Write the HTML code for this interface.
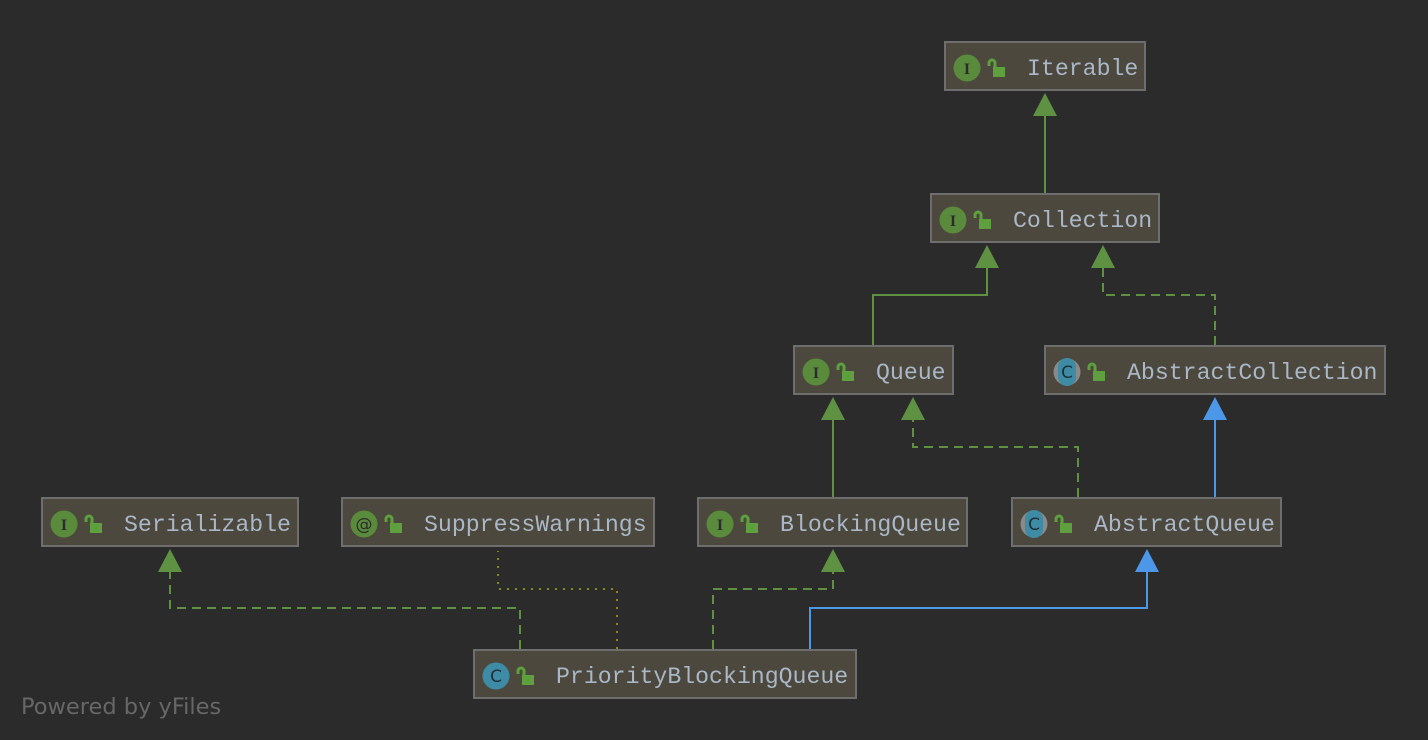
<!DOCTYPE html>
<html><head><meta charset="utf-8"><style>
html,body{margin:0;padding:0;background:#2b2b2b;width:1428px;height:740px;overflow:hidden}
.b{position:absolute;height:46px;background:#4c483e;border:2px solid #6e6e6e;box-sizing:content-box}
.t{position:absolute;left:81px;top:2px;line-height:48px;font-family:"Liberation Mono",monospace;font-size:23.2px;color:#a9b7c6;white-space:nowrap}
.ic{position:absolute;left:7px;top:11px}
.pw{position:absolute;left:21px;top:694px;font-family:"DejaVu Sans","Liberation Sans",sans-serif;font-size:22.5px;color:#676767}
</style></head><body>
<svg width="1428" height="740" style="position:absolute;left:0;top:0">
<g fill="none" stroke-width="2">
<path d="M1045 193V115" stroke="#5f9143"/>
<path d="M873 345V295H987V267" stroke="#5f9143"/>
<path d="M1215 345V295H1103V267" stroke="#5f9143" stroke-dasharray="9 6"/>
<path d="M833 497V419" stroke="#5f9143"/>
<path d="M1078 497V447H913V419" stroke="#5f9143" stroke-dasharray="9 6"/>
<path d="M1215 497V419" stroke="#4d97e8"/>
<path d="M520 649V608H170V571" stroke="#5f9143" stroke-dasharray="9 6"/>
<path d="M617 649V589H498V551" stroke="#8a8a10" stroke-dasharray="2 6"/>
<path d="M713 649V589H833V571" stroke="#5f9143" stroke-dasharray="9 6"/>
<path d="M810 649V608H1147V571" stroke="#4d97e8"/>
</g>
<g fill="#5f9143">
<path d="M1045 93l-12 23h24z"/>
<path d="M987 245l-12 23h24z"/>
<path d="M1103 245l-12 23h24z"/>
<path d="M833 397l-12 23h24z"/>
<path d="M913 397l-12 23h24z"/>
<path d="M170 549l-12 23h24z"/>
<path d="M833 549l-12 23h24z"/>
</g>
<g fill="#4d97e8">
<path d="M1215 397l-12 23h24z"/>
<path d="M1147 549l-12 23h24z"/>
</g>
</svg>

<div class="b" style="left:944px;top:41px;width:198px"><svg class="ic" width="60" height="28"><circle cx="14" cy="14" r="13.5" fill="#5a8b3d"/><text x="14" y="20" text-anchor="middle" font-family="Liberation Serif,serif" font-size="16" fill="#2b2b2b" font-weight="bold">I</text><path d="M42 15v-6a3 3 0 0 0-6 0v3" stroke="#5fa03e" stroke-width="3" fill="none"/><rect x="40" y="13" width="12" height="10" fill="#5fa03e"/></svg><span class="t">Iterable</span></div>

<div class="b" style="left:930px;top:193px;width:226px"><svg class="ic" width="60" height="28"><circle cx="14" cy="14" r="13.5" fill="#5a8b3d"/><text x="14" y="20" text-anchor="middle" font-family="Liberation Serif,serif" font-size="16" fill="#2b2b2b" font-weight="bold">I</text><path d="M42 15v-6a3 3 0 0 0-6 0v3" stroke="#5fa03e" stroke-width="3" fill="none"/><rect x="40" y="13" width="12" height="10" fill="#5fa03e"/></svg><span class="t">Collection</span></div>

<div class="b" style="left:793px;top:345px;width:157px"><svg class="ic" width="60" height="28"><circle cx="14" cy="14" r="13.5" fill="#5a8b3d"/><text x="14" y="20" text-anchor="middle" font-family="Liberation Serif,serif" font-size="16" fill="#2b2b2b" font-weight="bold">I</text><path d="M42 15v-6a3 3 0 0 0-6 0v3" stroke="#5fa03e" stroke-width="3" fill="none"/><rect x="40" y="13" width="12" height="10" fill="#5fa03e"/></svg><span class="t">Queue</span></div>

<div class="b" style="left:1044px;top:345px;width:338px"><svg class="ic" width="60" height="28"><circle cx="14" cy="14" r="13.5" fill="#8a8a8a"/><rect x="5" y="0" width="18" height="28" rx="9" fill="#3e8ba6"/><text x="14" y="20" text-anchor="middle" font-family="DejaVu Sans,sans-serif" font-size="17" fill="#1f2f38">C</text><path d="M42 15v-6a3 3 0 0 0-6 0v3" stroke="#5fa03e" stroke-width="3" fill="none"/><rect x="40" y="13" width="12" height="10" fill="#5fa03e"/></svg><span class="t">AbstractCollection</span></div>

<div class="b" style="left:41px;top:497px;width:254px"><svg class="ic" width="60" height="28"><circle cx="14" cy="14" r="13.5" fill="#5a8b3d"/><text x="14" y="20" text-anchor="middle" font-family="Liberation Serif,serif" font-size="16" fill="#2b2b2b" font-weight="bold">I</text><path d="M42 15v-6a3 3 0 0 0-6 0v3" stroke="#5fa03e" stroke-width="3" fill="none"/><rect x="40" y="13" width="12" height="10" fill="#5fa03e"/></svg><span class="t">Serializable</span></div>

<div class="b" style="left:341px;top:497px;width:310px"><svg class="ic" width="60" height="28"><circle cx="14" cy="14" r="13.5" fill="#5a8b3d"/><text x="14" y="20" text-anchor="middle" font-family="DejaVu Sans,sans-serif" font-size="17" fill="#2b2b2b">@</text><path d="M42 15v-6a3 3 0 0 0-6 0v3" stroke="#5fa03e" stroke-width="3" fill="none"/><rect x="40" y="13" width="12" height="10" fill="#5fa03e"/></svg><span class="t">SuppressWarnings</span></div>

<div class="b" style="left:697px;top:497px;width:267px"><svg class="ic" width="60" height="28"><circle cx="14" cy="14" r="13.5" fill="#5a8b3d"/><text x="14" y="20" text-anchor="middle" font-family="Liberation Serif,serif" font-size="16" fill="#2b2b2b" font-weight="bold">I</text><path d="M42 15v-6a3 3 0 0 0-6 0v3" stroke="#5fa03e" stroke-width="3" fill="none"/><rect x="40" y="13" width="12" height="10" fill="#5fa03e"/></svg><span class="t">BlockingQueue</span></div>

<div class="b" style="left:1011px;top:497px;width:267px"><svg class="ic" width="60" height="28"><circle cx="14" cy="14" r="13.5" fill="#8a8a8a"/><rect x="5" y="0" width="18" height="28" rx="9" fill="#3e8ba6"/><text x="14" y="20" text-anchor="middle" font-family="DejaVu Sans,sans-serif" font-size="17" fill="#1f2f38">C</text><path d="M42 15v-6a3 3 0 0 0-6 0v3" stroke="#5fa03e" stroke-width="3" fill="none"/><rect x="40" y="13" width="12" height="10" fill="#5fa03e"/></svg><span class="t">AbstractQueue</span></div>

<div class="b" style="left:473px;top:649px;width:380px"><svg class="ic" width="60" height="28"><circle cx="14" cy="14" r="13.5" fill="#3e8ba6"/><text x="14" y="20" text-anchor="middle" font-family="DejaVu Sans,sans-serif" font-size="17" fill="#1f2f38">C</text><path d="M42 15v-6a3 3 0 0 0-6 0v3" stroke="#5fa03e" stroke-width="3" fill="none"/><rect x="40" y="13" width="12" height="10" fill="#5fa03e"/></svg><span class="t">PriorityBlockingQueue</span></div>

<div class="pw">Powered by yFiles</div>
</body></html>
